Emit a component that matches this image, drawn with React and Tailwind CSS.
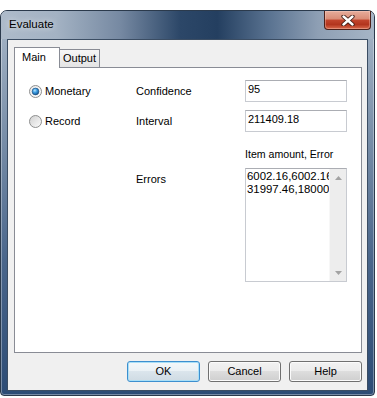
import React from 'react';

function Radio({ checked }) {
  return (
    <svg width="13" height="13" viewBox="0 0 13 13" className="shrink-0">
      <defs>
        <linearGradient id={checked ? 'rg-on' : 'rg-off'} x1="0" y1="0" x2="1" y2="1">
          <stop offset="0" stopColor={checked ? '#e9e9e9' : '#cfcfcf'} />
          <stop offset="1" stopColor="#fdfdfd" />
        </linearGradient>
        <radialGradient id="rg-dot" cx="0.4" cy="0.35" r="0.7">
          <stop offset="0" stopColor="#b6e6ff" />
          <stop offset="0.45" stopColor="#3a9ae0" />
          <stop offset="1" stopColor="#0f4f8a" />
        </radialGradient>
      </defs>
      <circle cx="6.5" cy="6.5" r="6" fill={`url(#${checked ? 'rg-on' : 'rg-off'})`} stroke="#8e8f8f" />
      {checked && <circle cx="6.5" cy="6.5" r="3.4" fill="url(#rg-dot)" stroke="#1c4a78" strokeWidth="0.6" />}
    </svg>
  );
}

function Field({ value }) {
  return (
    <div className="h-[22px] border border-[#c8cbd1] border-t-[#abadb3] bg-white pl-[2px] pt-[1px] leading-[14px]">
      {value}
    </div>
  );
}

function Btn({ children, primary }) {
  return (
    <button
      className={
        primary
          ? 'w-[73px] h-[21px] rounded-[3px] border border-[#3c8fcf] shadow-[inset_0_0_0_1px_#a9dff7] bg-[linear-gradient(180deg,#f4f8fa_0%,#eaf1f5_49%,#dbe5ec_50%,#cfdbe3_100%)] text-[11px] leading-[13px] text-black'
          : 'w-[73px] h-[21px] rounded-[3px] border border-[#707070] shadow-[inset_0_0_0_1px_#fbfbfb] bg-[linear-gradient(180deg,#f2f2f2_0%,#ebebeb_49%,#dddddd_50%,#cfcfcf_100%)] text-[11px] leading-[13px] text-black'
      }
    >
      {children}
    </button>
  );
}

export default function App() {
  return (
    <div className="w-[377px] h-[398px] bg-white pt-[10px] font-['Liberation_Sans',Arial,sans-serif] text-[11px] text-black">
      <div className="w-[375px] h-[386px] rounded-t-[7px] rounded-b-[4px] border border-[#2b3a4c] bg-[linear-gradient(180deg,#a9b8c9_0%,#7d92ab_30%,#4a668b_65%,#2d4c75_100%)] shadow-[inset_0_0_0_1px_rgba(255,255,255,0.35)] flex flex-col">
        {/* title bar */}
        <div className="relative h-[28px] rounded-t-[6px] bg-[linear-gradient(90deg,#aebbca_0%,#a3b2c3_15%,#7689a2_32%,#2c4768_48%,#243f60_58%,#5a7391_72%,#8e9fb4_85%,#a6b5c6_100%)] flex items-center pl-[8px]">
          <span className="text-[11.5px] [text-shadow:0_0_6px_rgba(255,255,255,0.9)]">Evaluate</span>
          <div className="absolute right-[3px] top-0 w-[47px] h-[19px] rounded-b-[4px] border border-t-0 border-[#4d2019] bg-[linear-gradient(180deg,#e6ad9c_0%,#d98c76_45%,#c2452d_50%,#b3351e_75%,#d9694c_100%)] shadow-[inset_0_0_0_1px_rgba(255,220,210,0.35)] flex items-center justify-center">
            <svg width="14" height="11" viewBox="0 0 14 11">
              <path d="M2.5 1.5 L11.5 9.5 M11.5 1.5 L2.5 9.5" stroke="#3d1a12" strokeWidth="4.2" strokeLinecap="round" />
              <path d="M2.5 1.5 L11.5 9.5 M11.5 1.5 L2.5 9.5" stroke="#ffffff" strokeWidth="2.4" strokeLinecap="round" />
            </svg>
          </div>
        </div>

        {/* client area */}
        <div className="mx-[6px] mb-[4px] flex-1 bg-[#f0f0f0] border border-[#3b4d63] pl-[6px] pt-[7px] flex flex-col">
          {/* tabs */}
          <div className="flex items-end h-[20px]">
            <div className="relative z-10 -mb-[1px] w-[46px] h-[21px] bg-white border border-b-0 border-[#898c95] pl-[7px] pt-[3px] leading-[13px]">
              Main
            </div>
            <div className="w-[40px] h-[18px] border border-l-0 border-b-0 border-[#898c95] bg-[linear-gradient(180deg,#f6f6f6,#e4e4e4)] pl-[3px] pt-[2px] leading-[13px]">
              Output
            </div>
          </div>

          {/* panel */}
          <div className="w-[348px] h-[286px] bg-white border border-[#898c95] flex pt-[12px] pl-[14px]">
            <div className="w-[107px] flex flex-col">
              <div className="h-[22px] flex items-center gap-[3px]">
                <Radio checked />
                <span>Monetary</span>
              </div>
              <div className="h-[22px] mt-[8px] flex items-center gap-[3px]">
                <Radio />
                <span>Record</span>
              </div>
            </div>

            <div className="w-[109px] flex flex-col">
              <div className="h-[22px] flex items-center">Confidence</div>
              <div className="h-[22px] mt-[8px] flex items-center">Interval</div>
              <div className="mt-[41px] leading-[13px]">Errors</div>
            </div>

            <div className="w-[102px] flex flex-col">
              <Field value="95" />
              <div className="mt-[8px]">
                <Field value="211409.18" />
              </div>
              <div className="mt-[15px] leading-[14px] whitespace-nowrap text-[10.6px]">Item amount, Error</div>
              <div className="mt-[7px] h-[114px] border border-[#c8cbd1] border-t-[#abadb3] bg-white flex">
                <div className="flex-1 min-w-0 overflow-hidden whitespace-nowrap pl-[1px] pt-[1px] leading-[13px] text-[11.4px]">
                  <div>6002.16,6002.16</div>
                  <div>31997.46,18000</div>
                </div>
                <div className="w-[17px] shrink-0 bg-[#ededed] border-l border-[#f7f7f7] flex flex-col justify-between">
                  <div className="h-[17px] flex items-center justify-center">
                    <svg width="7" height="4" viewBox="0 0 7 4">
                      <path d="M0 4 L3.5 0 L7 4 Z" fill="#a3a3a3" />
                    </svg>
                  </div>
                  <div className="h-[17px] flex items-center justify-center">
                    <svg width="7" height="4" viewBox="0 0 7 4">
                      <path d="M0 0 L7 0 L3.5 4 Z" fill="#a3a3a3" />
                    </svg>
                  </div>
                </div>
              </div>
            </div>
          </div>

          {/* buttons */}
          <div className="w-[348px] mt-[8px] flex justify-end gap-[8px]">
            <Btn primary>OK</Btn>
            <Btn>Cancel</Btn>
            <Btn>Help</Btn>
          </div>
        </div>
      </div>
    </div>
  );
}
